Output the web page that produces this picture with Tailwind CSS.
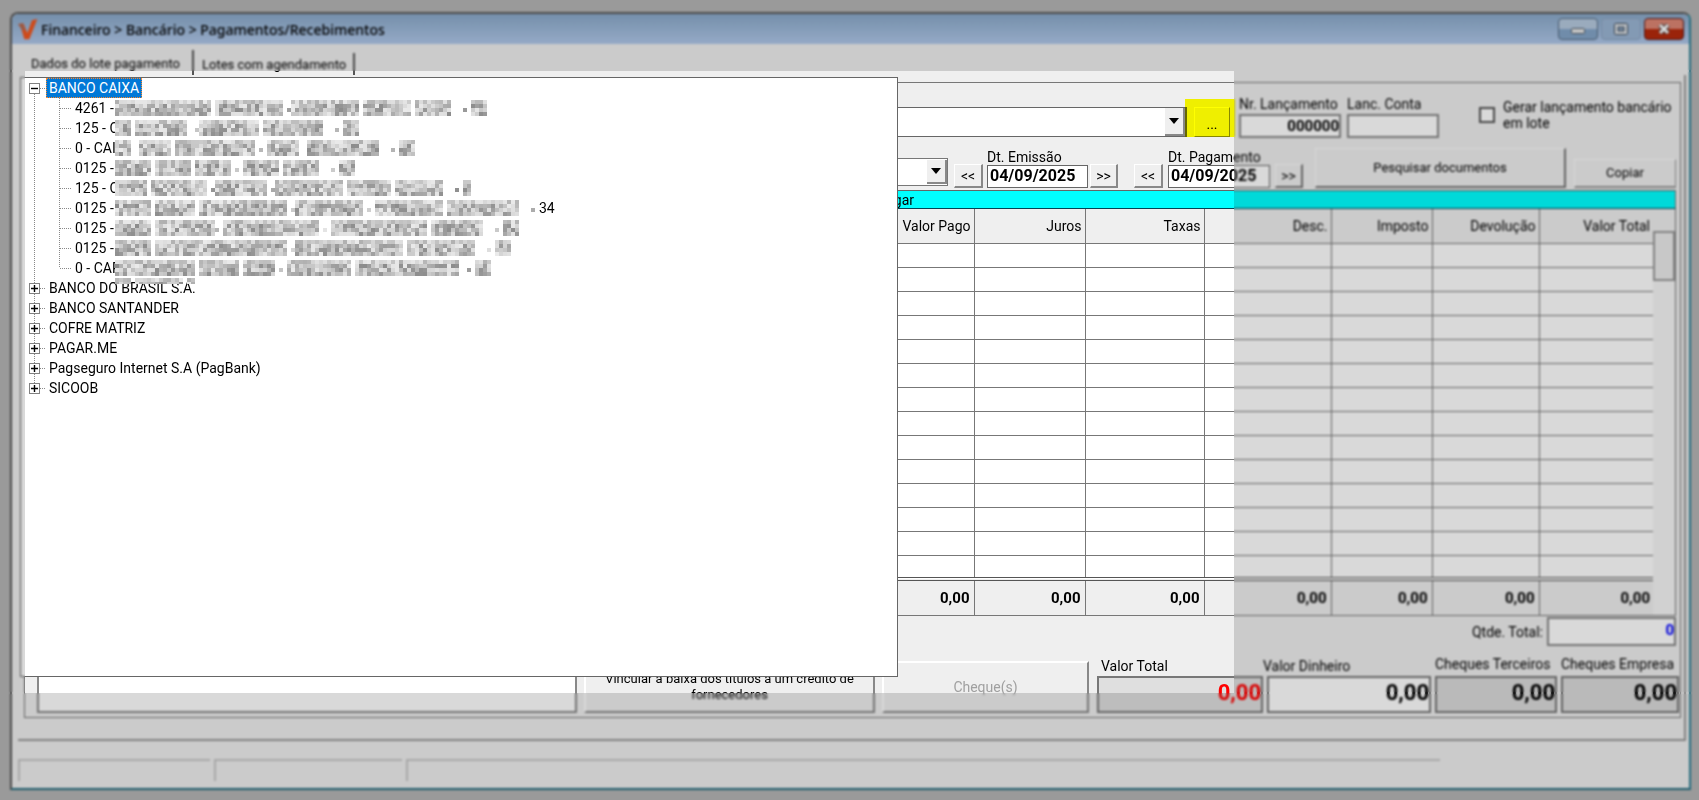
<!DOCTYPE html>
<html lang="pt-BR">
<head>
    <meta charset="UTF-8">
    <meta name="viewport" content="width=device-width, initial-scale=1.0">
    <title>Financeiro - Pagamentos/Recebimentos</title>
    <script src="https://cdn.jsdelivr.net/npm/@tailwindcss/browser@4"></script>
</head>
<body class="relative flex min-h-screen bg-[#b5b5b5] pt-3 pr-2 pb-[10px] pl-[10px] font-['Roboto','Liberation_Sans',sans-serif] text-[14px] leading-4 text-black">
    <div class="relative flex flex-1 flex-col rounded-t-lg border-2 border-t-[#5a5a5a] border-l-[#5a5a5a] border-r-[#2f8196] border-b-[#256d80] bg-[#efefef]">

        <!-- Barra de título -->
        <header class="flex h-[30px] items-center rounded-t-md bg-linear-to-b from-[#8aa9c9] to-[#b0c8ea] pr-[5px] pl-[6px]">
            <svg class="h-[21px] w-5" viewBox="0 0 60 63" aria-hidden="true">
                <path d="M6 16 L17 14 L28 42 L42 4 L58 0 L34 61 L19 61 Z" fill="#f2581f"/>
                <path d="M0 15 L15 12 L22 34 L12 34 Z" fill="#b56a52"/>
            </svg>
            <h1 class="ml-[3px] flex-1 pt-[2px] font-['Noto_Sans',sans-serif] text-[14px] font-medium">Financeiro &gt; Bancário &gt; Pagamentos/Recebimentos</h1>
            <div class="flex gap-[3px]">
                <button aria-label="Minimizar" class="flex h-[22px] w-10 items-center justify-center rounded-sm border border-[#566b82] bg-linear-to-b from-[#b5c9df] from-50% to-[#84a5c8] to-50%">
                    <svg class="h-3 w-4" viewBox="0 0 16 12"><rect x="1.5" y="5.500" width="13" height="5" rx="1" fill="#e8e8e8" stroke="#4e5a66"/></svg>
                </button>
                <button aria-label="Maximizar" class="flex h-[22px] w-10 items-center justify-center rounded-sm border border-[#8aa3c0] bg-[#9bb5d4]">
                    <svg class="h-3 w-4" viewBox="0 0 16 12"><rect x="1.500" y="0.500" width="13" height="11" rx="1" fill="#dfe4ea" stroke="#3e4a56"/><rect x="5" y="4" width="6" height="4" fill="#8aa3c0" stroke="#3e4a56"/></svg>
                </button>
                <button aria-label="Fechar" class="flex h-[22px] w-10 items-center justify-center rounded-sm border border-[#5c1a1a] bg-linear-to-b from-[#dd8674] from-50% to-[#b62a0c] to-50%">
                    <svg class="h-3 w-4" viewBox="0 0 16 12"><path d="M4 2 L12 10 M12 2 L4 10" stroke="#4e4040" stroke-width="5"/><path d="M4 2 L12 10 M12 2 L4 10" stroke="#fff" stroke-width="3"/></svg>
                </button>
            </div>
        </header>

        <!-- Abas -->
        <nav class="flex h-[31px] items-end pl-[7px] text-[13px] whitespace-nowrap">
            <a href="#lote" class="h-[25px] w-[175px] border-r-2 border-[#555] pt-[6px] pl-3">Dados do lote pagamento</a>
            <a href="#agendamento" class="h-[22px] w-[161px] border-r-2 border-[#555] pt-1 pl-2">Lotes com agendamento</a>
        </nav>

        <main class="mr-[3px] ml-[6px] flex flex-1 border-r-2 border-b-2 border-[#999]">
            <div class="mt-[7px] mr-[3px] mb-[21px] ml-[6px] flex flex-1 flex-col border border-[#777]">

                <div class="flex h-[62px] items-start">
                    <div class="relative mt-6 ml-2 flex-1">
                        <select aria-label="Conta bancária" class="h-[30px] w-full appearance-none border border-r-2 border-[#666] bg-white"><option></option></select>
                        <span class="pointer-events-none absolute top-[1px] right-[2px] flex h-7 w-5 items-center justify-center border-r-2 border-b-2 border-[#888] bg-[#efefef]">
                            <svg class="h-[6px] w-[10px]" viewBox="0 0 10 6"><path d="M0 0 H10 L5 6 Z"/></svg>
                        </span>
                    </div>
                    <div class="relative mt-6 ml-[7px]">
                        <button class="h-[30px] w-9 border border-t-white border-l-white border-r-[#888] border-b-[#888] bg-[#efefef] pt-1">...</button>
                        <span class="pointer-events-none absolute -top-2 -left-[9px] h-[38px] w-[50px] bg-[#ffff00] mix-blend-multiply"></span>
                    </div>
                    <div class="mt-[13px] ml-[9px] w-[102px]">
                        <label for="nrLancamento" class="block h-[18px]">Nr. Lançamento</label>
                        <input id="nrLancamento" value="000000" class="h-6 w-full border-2 border-[#888] bg-white text-right text-[15px] font-bold">
                    </div>
                    <div class="mt-[13px] ml-[6px] w-[92px]">
                        <label for="lancConta" class="block h-[18px]">Lanc. Conta</label>
                        <input id="lancConta" class="h-6 w-full border-2 border-[#888] bg-white">
                    </div>
                    <input id="gerar" type="checkbox" class="mt-6 ml-10 size-4 appearance-none border-2 border-[#555] bg-white">
                    <label for="gerar" class="mt-4 ml-2 w-[177px]">Gerar lançamento bancário<br>em lote</label>
                </div>

                <div class="flex h-[45px] items-start">
                    <div class="relative mt-[13px] ml-2 flex-1">
                        <select aria-label="Forma de pagamento" class="h-7 w-full appearance-none border border-[#777] bg-white"><option></option></select>
                        <span class="pointer-events-none absolute top-[2px] right-[1px] flex h-6 w-5 items-center justify-center border-r-2 border-b-2 border-[#888] bg-[#efefef]">
                            <svg class="h-[6px] w-[10px]" viewBox="0 0 10 6"><path d="M0 0 H10 L5 6 Z"/></svg>
                        </span>
                    </div>
                    <button class="mt-[19px] ml-[6px] h-6 w-[29px] border border-r-2 border-b-2 border-t-white border-l-white border-r-[#888] border-b-[#888]">&lt;&lt;</button>
                    <div class="mt-1 ml-1 w-[101px]">
                        <label for="emissao" class="block h-4">Dt. Emissão</label>
                        <input id="emissao" value="04/09/2025" class="h-[23px] w-full border border-[#666] bg-white px-[2px] pb-[2px] text-[16px] font-bold">
                    </div>
                    <button class="mt-[19px] ml-[2px] h-6 w-7 border border-r-2 border-b-2 border-t-white border-l-white border-r-[#888] border-b-[#888]">&gt;&gt;</button>
                    <button class="mt-[19px] ml-4 h-6 w-[29px] border border-r-2 border-b-2 border-t-white border-l-white border-r-[#888] border-b-[#888]">&lt;&lt;</button>
                    <div class="mt-1 ml-[5px] w-[102px]">
                        <label for="pagamento" class="block h-4">Dt. Pagamento</label>
                        <input id="pagamento" value="04/09/2025" class="h-[23px] w-full border border-[#666] bg-white px-[2px] pb-[2px] text-[16px] font-bold">
                    </div>
                    <button class="mt-[19px] ml-[5px] h-6 w-7 border border-r-2 border-b-2 border-t-white border-l-white border-r-[#777] border-b-[#777]">&gt;&gt;</button>
                    <button class="mt-[3px] ml-3 h-10 w-[251px] border border-r-2 border-b-2 border-t-white border-l-white border-r-[#777] border-b-[#777] text-[13px]">Pesquisar documentos</button>
                    <button class="mt-[14px] mr-1 ml-2 h-[29px] w-[102px] border border-b-2 border-t-white border-l-white border-r-[#999] border-b-[#999] text-[13px]">Copiar</button>
                </div>

                <div class="mr-1 flex h-[19px] items-center border border-t-[#666] border-r-[#777] border-b-[#045] border-l-[#777] bg-[#00ffff]">
                    <span class="w-[888px] text-right">pagar</span>
                </div>

                <div class="mr-1 flex border-r border-b border-[#777]">
                    <table class="flex-1 table-fixed border-collapse">
                        <colgroup>
                            <col><col class="w-[111px]"><col class="w-[119px]"><col class="w-[127px]"><col class="w-[101px]"><col class="w-[107px]"><col class="w-[114px]">
                        </colgroup>
                        <thead>
                            <tr class="h-[34px] border-b border-[#777] text-right">
                                <th class="border-r border-[#777] pr-[3px] font-normal">Valor Pago</th>
                                <th class="border-r border-[#777] pr-[3px] font-normal">Juros</th>
                                <th class="border-r border-[#777] pr-[3px] font-normal">Taxas</th>
                                <th class="border-r border-[#777] pr-[3px] font-normal">Desc.</th>
                                <th class="border-r border-[#777] pr-[3px] font-normal">Imposto</th>
                                <th class="border-r border-[#777] pr-[3px] font-normal">Devolução</th>
                                <th class="pr-[3px] font-normal">Valor Total</th>
                            </tr>
                        </thead>
                        <tbody id="linhas" class="bg-white"></tbody>
                        <tfoot>
                            <tr class="h-[36px] border-t-4 border-double border-[#555] text-right text-[15px] font-bold">
                                <td class="border-r border-[#777] pr-1">0,00</td>
                                <td class="border-r border-[#777] pr-1">0,00</td>
                                <td class="border-r border-[#777] pr-1">0,00</td>
                                <td class="border-r border-[#777] pr-1">0,00</td>
                                <td class="border-r border-[#777] pr-1">0,00</td>
                                <td class="border-r border-[#777] pr-1">0,00</td>
                                <td class="pr-[3px]">0,00</td>
                            </tr>
                        </tfoot>
                    </table>
                    <div class="w-[22px] bg-[#f6f6f6]">
                        <div class="h-[22px] bg-[#efefef]"></div>
                        <div class="h-[50px] border-2 border-[#999] bg-[#ececec]"></div>
                    </div>
                </div>

                <div class="mr-1 flex items-center justify-end gap-1 pt-[1px]">
                    <label for="qtde">Qtde. Total:</label>
                    <input id="qtde" value="0" class="h-[29px] w-[129px] border-2 border-[#888] bg-white pb-1 text-right text-[15px] font-bold text-[#0000ff]">
                </div>

                <div class="flex flex-1 items-end pb-1">
                    <textarea aria-label="Observação" class="ml-3 h-12 flex-1 resize-none border-2 border-[#888] bg-white"></textarea>
                    <button class="ml-[7px] h-[52px] w-[291px] border-2 border-t-white border-l-white border-r-[#888] border-b-[#888] px-3 text-[13px]">Vincular a baixa dos títulos a um crédito de<br>fornecedores</button>
                    <button disabled class="ml-[7px] h-[52px] w-[207px] border-2 border-t-white border-l-white border-r-[#888] border-b-[#888] text-[#a0a0a0]">Cheque(s)</button>
                    <div class="ml-2 w-[166px]">
                        <label for="valorTotal" class="block h-[18px] pl-1">Valor Total</label>
                        <input id="valorTotal" value="0,00" class="h-[37px] w-full border-2 border-[#777] bg-[#dfdfdf] pb-1 text-right text-[22px] font-bold text-[#ff0000]">
                    </div>
                    <div class="ml-1 w-[164px]">
                        <label for="dinheiro" class="-ml-1 block h-[18px]">Valor Dinheiro</label>
                        <input id="dinheiro" value="0,00" class="h-[37px] w-full border-2 border-[#777] bg-white pb-1 text-right text-[22px] font-bold">
                    </div>
                    <div class="ml-1 w-[122px]">
                        <label for="terceiros" class="block h-5">Cheques Terceiros</label>
                        <input id="terceiros" value="0,00" class="h-[37px] w-full border-2 border-[#777] bg-[#dbdbdb] pb-1 text-right text-[22px] font-bold">
                    </div>
                    <div class="mr-[1px] ml-1 w-[118px]">
                        <label for="empresa" class="block h-5">Cheques Empresa</label>
                        <input id="empresa" value="0,00" class="h-[37px] w-full border-2 border-[#777] bg-[#dbdbdb] pb-1 text-right text-[22px] font-bold">
                    </div>
                </div>
            </div>
        </main>

        <!-- Barra de status -->
        <footer class="flex h-[47px] gap-1 pt-[18px] pl-[6px]">
            <div class="h-[22px] w-[192px] border-t-2 border-l-2 border-[#c6c6c6]"></div>
            <div class="h-[22px] w-[188px] border-t-2 border-l-2 border-[#c6c6c6]"></div>
            <div class="mr-[249px] h-[22px] flex-1 border-t-2 border-l-2 border-[#c6c6c6]"></div>
        </footer>

        <!-- Lista de contas aberta -->
        <div class="absolute top-[63px] left-2 h-[600px] w-[878px] border border-[#666] bg-white">
            <svg class="hidden">
                <symbol id="mais" viewBox="0 0 28 20">
                    <path d="M13.5 0 V20 M19 10.5 H25" stroke="#888" stroke-dasharray="1 1"/>
                    <rect x="8.5" y="5.5" width="10" height="10" fill="#fff" stroke="#808080"/>
                    <path d="M10 10.5 H17 M13.5 7 V14" stroke="#000" stroke-width="1.4"/>
                </symbol>
                <symbol id="mais-fim" viewBox="0 0 28 20">
                    <path d="M13.5 0 V5 M19 10.5 H25" stroke="#888" stroke-dasharray="1 1"/>
                    <rect x="8.5" y="5.5" width="10" height="10" fill="#fff" stroke="#808080"/>
                    <path d="M10 10.5 H17 M13.5 7 V14" stroke="#000" stroke-width="1.4"/>
                </symbol>
                <symbol id="menos" viewBox="0 0 28 20">
                    <path d="M13.5 16 V20 M19 10.5 H25" stroke="#888" stroke-dasharray="1 1"/>
                    <rect x="8.5" y="5.5" width="10" height="10" fill="#fff" stroke="#808080"/>
                    <path d="M10 10.5 H17" stroke="#000" stroke-width="1.4"/>
                </symbol>
                <symbol id="filho" viewBox="0 0 54 20">
                    <path d="M13.5 0 V20 M38.5 0 V20 M39 10.5 H50" stroke="#888" stroke-dasharray="1 1"/>
                </symbol>
                <symbol id="filho-fim" viewBox="0 0 54 20">
                    <path d="M13.5 0 V20 M38.5 0 V10 M39 10.5 H50" stroke="#888" stroke-dasharray="1 1"/>
                </symbol>
            </svg>
            <ul>
                <li>
                    <div class="flex h-5 items-center">
                        <svg class="h-5 w-7"><use href="#menos"/></svg>
                        <span class="-ml-[3px] h-5 border border-dotted border-[#ff8728] bg-[#0078d7] px-[2px] leading-[18px] text-white">BANCO CAIXA</span>
                    </div>
                    <ul id="contas"></ul>
                </li>
                <li class="relative flex h-5 items-center">
                    <svg class="h-5 w-7"><use href="#mais"/></svg>BANCO DO BRASIL S.A.
                    <span class="absolute top-0 left-[94px] h-[6px] w-20 overflow-hidden" data-mascara="w4 s1 w12 s1 w2"></span>
                </li>
                <li class="flex h-5 items-center"><svg class="h-5 w-7"><use href="#mais"/></svg>BANCO SANTANDER</li>
                <li class="flex h-5 items-center"><svg class="h-5 w-7"><use href="#mais"/></svg>COFRE MATRIZ</li>
                <li class="flex h-5 items-center"><svg class="h-5 w-7"><use href="#mais"/></svg>PAGAR.ME</li>
                <li class="flex h-5 items-center"><svg class="h-5 w-7"><use href="#mais"/></svg>Pagseguro Internet S.A (PagBank)</li>
                <li class="flex h-5 items-center"><svg class="h-5 w-7"><use href="#mais-fim"/></svg>SICOOB</li>
            </ul>
        </div>
    </div>

    <!-- Escurece tudo em volta da área em foco -->
    <div class="pointer-events-none absolute inset-0 grid grid-cols-[25px_1209px_1fr] grid-rows-[71px_622px_1fr]">
        <div class="col-span-3 bg-black/15 backdrop-blur-[1px]"></div>
        <div class="bg-black/15 backdrop-blur-[1px]"></div>
        <div></div>
        <div class="bg-black/15 backdrop-blur-[1px]"></div>
        <div class="col-span-3 bg-black/15 backdrop-blur-[1px]"></div>
    </div>

    <script>
        const celula = '<td class="border-r border-[#777]"></td>';
        document.getElementById("linhas").innerHTML =
            ('<tr class="h-6 border-b border-[#777]">' + celula.repeat(6) + '<td></td></tr>').repeat(14);

        // w = palavra, s = espaço, h = hífen (em blocos de 4px)
        const contas = [
            ["4261 -", "w24 s1 w17 s1 h w17 s1 w12 s1 w9 s3 h s1 w4"],
            ["125 - C", "w4 s1 w13 s2 h w15 s1 w15 s3 h s1 w4"],
            ["0 - CAI", "w4 s2 w8 s1 w20 s1 h s1 w8 s2 w18 s3 h s1 w4"],
            ["0125 -", "w9 s1 w9 s1 w9 s1 h s1 w9 s1 w9 s3 h s1 w4"],
            ["125 - C", "w8 s1 w14 s1 h w13 s1 h w17 s1 w11 s1 w12 s3 h s1 w2"],
            ["0125 -", "w9 s1 w10 s1 w22 s1 h w17 s1 h s1 w17 s1 w18 s3 h", "34"],
            ["0125 -", "w9 s1 w15 h s1 w24 s1 h s1 w24 s1 w13 s3 h s1 w4"],
            ["0125 -", "w9 s1 w33 s1 h w27 s1 w17 s3 h s1 w4"],
            ["0 - CAP", "w20 s1 w10 s1 w8 s1 h s1 w16 s1 w26 s2 h s1 w4"]
        ];

        let semente = 7;
        function aleatorio() {
            semente = (semente * 16807) % 2147483647;
            return semente / 2147483647;
        }

        function mascara(padrao) {
            let x = 0, blocos = "";
            for (const parte of padrao.split(" ")) {
                const n = parte === "h" ? 1 : Number(parte.slice(1));
                for (let i = 0; i < n; i++, x += 4) {
                    if (parte[0] === "s") continue;
                    for (let y = 0; y < 4; y++) {
                        if (parte === "h" && y !== 2) continue;
                        const base = y === 0 ? 175 : 140;
                        const c = Math.round(base + aleatorio() * (235 - base));
                        blocos += `<rect x="${x}" y="${y * 4}" width="4" height="4" fill="rgb(${c},${c},${c})"/>`;
                    }
                }
            }
            return `<svg class="relative shrink-0" width="${x}" height="16" viewBox="0 0 ${x} 16" shape-rendering="crispEdges" aria-hidden="true">${blocos}</svg>`;
        }

        document.getElementById("contas").innerHTML = contas.map(([inicio, padrao, fim], i) => `
            <li class="flex h-5 items-center">
                <svg class="h-5 w-[54px]"><use href="#${i === contas.length - 1 ? "filho-fim" : "filho"}"/></svg>
                <span class="w-10 whitespace-nowrap">${inicio}</span>
                ${mascara(padrao)}
                <span class="ml-1">${fim || ""}</span>
            </li>`).join("");
        document.querySelectorAll("[data-mascara]").forEach(el => el.innerHTML = mascara(el.dataset.mascara));
    </script>
</body>
</html>
